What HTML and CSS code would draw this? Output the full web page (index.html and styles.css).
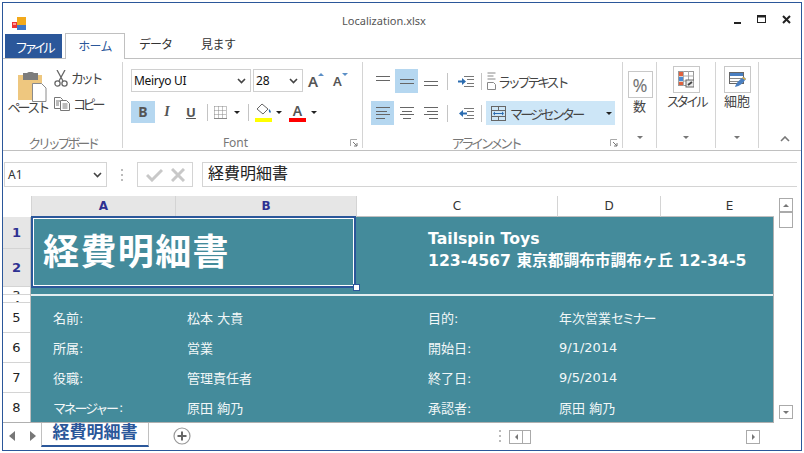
FILE: index.html
```html
<!DOCTYPE html>
<html lang="ja">
<head>
    <meta charset="UTF-8">
    <meta name="viewport" content="width=device-width, initial-scale=1.0">
    <title>Localization.xlsx</title>
    <link rel="stylesheet" href="styles.css">
</head>

<body>
<div class="window">

    <div class="titlebar">
        <svg class="app-icon" width="15" height="14" viewBox="0 0 15 14">
            <rect x="0" y="5" width="5" height="6" fill="#e33"/>
            <rect x="1" y="6" width="3" height="2" fill="#f99"/>
            <rect x="5" y="0" width="9" height="8" fill="#f2a91c"/>
            <rect x="5" y="8" width="9" height="5" fill="#3f78c8"/>
        </svg>
        <div class="doc-title">Localization.xlsx</div>
        <div class="win-buttons">
            <svg width="9" height="9" viewBox="0 0 9 9"><rect x="1" y="7" width="7" height="2" fill="#222"/></svg>
            <svg width="10" height="9" viewBox="0 0 10 9"><rect x="0.5" y="0.5" width="8" height="7" fill="none" stroke="#222"/><rect x="0" y="0" width="9" height="2.5" fill="#222"/></svg>
            <svg width="9" height="9" viewBox="0 0 9 9"><path d="M1 1l7 7M8 1l-7 7" stroke="#222" stroke-width="2"/></svg>
        </div>
    </div>

    <div class="tabs">
        <div class="tab tab-file"><span class="tab-file-text">ファイル</span></div>
        <div class="tab tab-active">ホーム</div>
        <div class="tab tab-data">データ</div>
        <div class="tab tab-view">見ます</div>
    </div>

    <div class="ribbon">
        <div class="group group-clip">
            <div class="group-body clip-body">
                <div class="paste">
                    <svg width="30" height="30" viewBox="0 0 30 30">
                        <rect x="1" y="3" width="24" height="25" fill="#eec77f"/>
                        <rect x="6" y="1" width="15" height="7" fill="#7d7d7d"/>
                        <rect x="10" y="0" width="7" height="4" rx="2" fill="#7d7d7d"/>
                        <path d="M15.500 11.500h9l4.500 4.500v13.500h-13.500z" fill="#fff" stroke="#8a8a8a"/>
                    </svg>
                    <span class="tight">ペースト</span>
                </div>
                <div class="clip-tools">
                    <div class="clip-tool">
                        <svg width="14" height="17" viewBox="0 0 14 17"><path d="M3 0l6 11M11 0l-6 11" stroke="#666" stroke-width="1.300" fill="none"/><circle cx="3.500" cy="13.500" r="2.600" fill="none" stroke="#666" stroke-width="1.300"/><circle cx="10.500" cy="13.500" r="2.600" fill="none" stroke="#666" stroke-width="1.300"/></svg>
                        <span class="tight">カット</span>
                    </div>
                    <div class="clip-tool">
                        <svg width="16" height="14" viewBox="0 0 16 14"><path d="M.5.500h6l2 2v9h-8z" fill="#fff" stroke="#777"/><path d="M6.500 3.500h6l3 3v7h-9z" fill="#fff" stroke="#777"/><path d="M2 4h4M2 6h3M2 8h3M8.500 7h5M8.500 9h5M8.500 11h5" stroke="#777"/></svg>
                        <span class="tight">コピー</span>
                    </div>
                </div>
            </div>
            <div class="group-label tight">クリップボード</div>
        </div>

        <div class="group group-font">
            <div class="group-body font-body">
                <div class="font-row">
                    <div class="combo combo-font">Meiryo UI<svg class="chev" width="9" height="6" viewBox="0 0 9 6"><path d="M1 1l3.500 3.500L8 1" fill="none" stroke="#444" stroke-width="1.600"/></svg></div>
                    <div class="combo combo-size">28<svg class="chev" width="9" height="6" viewBox="0 0 9 6"><path d="M1 1l3.500 3.500L8 1" fill="none" stroke="#444" stroke-width="1.600"/></svg></div>
                    <div class="grow-a"><span>A</span><i class="tri-up"></i></div>
                    <div class="shrink-a"><span>A</span><i class="tri-down"></i></div>
                </div>
                <div class="font-row font-row2">
                    <div class="fmt fmt-on fmt-b">B</div>
                    <div class="fmt fmt-i">I</div>
                    <div class="fmt fmt-u">U</div>
                    <i class="vsep"></i>
                    <svg class="border-icon" width="13" height="13" viewBox="0 0 13 13"><path d="M.5.500h12M.5 4.500h12M.5 8.500h12M.5.500v12M4.500.500v12M8.500.500v12M12.500.500v12" stroke="#888" stroke-dasharray="1 1" fill="none"/><path d="M0 12.500h13" stroke="#888"/></svg>
                    <i class="caret caret-border"></i>
                    <i class="vsep"></i>
                    <div class="color-btn color-fill">
                        <svg width="17" height="13" viewBox="0 0 17 13"><path d="M7 1l6 5-5 5-6-5z" fill="#fff" stroke="#666"/><path d="M14 6c2 2 2.500 3 1 4-1-1-1.500-2-1-4z" fill="#2b6cb0"/></svg>
                        <i class="swatch swatch-yellow"></i>
                    </div>
                    <i class="caret caret-fill"></i>
                    <div class="color-btn color-text">
                        <span>A</span>
                        <i class="swatch swatch-red"></i>
                    </div>
                    <i class="caret caret-text"></i>
                </div>
            </div>
            <div class="group-label label-launch">Font</div>
            <svg class="launcher" width="8" height="8" viewBox="0 0 8 8"><path d="M.5 7V.5H7" fill="none" stroke="#aaa"/><path d="M3 3l4 4M7 4v3H4" fill="none" stroke="#777"/></svg>
        </div>

        <div class="group group-align">
            <div class="group-body align-body">
                <div class="align-row">
                    <div class="al"><svg width="16" height="9" viewBox="0 0 16 9"><path d="M1 1.500h14M1 5.500h14" stroke="#666"/></svg></div>
                    <div class="al al-on al-mid"><svg width="16" height="9" viewBox="0 0 16 9"><path d="M1 1.500h14M1 5.500h14" stroke="#666"/></svg></div>
                    <div class="al al-bot"><svg width="16" height="9" viewBox="0 0 16 9"><path d="M1 1.500h14M1 5.500h14" stroke="#666"/></svg></div>
                    <i class="vsep"></i>
                    <div class="indent"><svg width="16" height="11" viewBox="0 0 16 11"><path d="M6 .5h10M9 3.500h7M9 7.500h7M6 10.500h10" stroke="#777"/><path d="M0 5.500h5" stroke="#2b6cb0" stroke-width="2"/><path d="M4 2l4 3.500-4 3.500z" fill="#2b6cb0"/></svg></div>
                    <i class="vsep"></i>
                    <div class="wrap-btn">
                        <svg width="10" height="18" viewBox="0 0 10 18"><path d="M.5 1h8M.5 4h6M.5 7h8" stroke="#888"/><path d="M.5 10.500h6l2 2v5h-8z" fill="#fff" stroke="#888"/></svg>
                        <span class="tight">ラップテキスト</span>
                    </div>
                </div>
                <div class="align-row">
                    <div class="al al-on"><svg width="16" height="12" viewBox="0 0 16 12"><path d="M1 .5h14M1 4.500h11M1 7.500h14M1 11.500h9" stroke="#666"/></svg></div>
                    <div class="al"><svg width="16" height="12" viewBox="0 0 16 12"><path d="M1 .5h14M3 4.500h10M1 7.500h14M4 11.500h8" stroke="#666"/></svg></div>
                    <div class="al"><svg width="16" height="12" viewBox="0 0 16 12"><path d="M1 .5h14M4 4.500h11M1 7.500h14M6 11.500h9" stroke="#666"/></svg></div>
                    <i class="vsep"></i>
                    <div class="indent"><svg width="16" height="11" viewBox="0 0 16 11"><path d="M6 .5h10M9 3.500h7M9 7.500h7M6 10.500h10" stroke="#777"/><path d="M4 5.500h5" stroke="#2b6cb0" stroke-width="2"/><path d="M5 2l-4 3.500 4 3.500z" fill="#2b6cb0"/></svg></div>
                    <i class="vsep"></i>
                    <div class="merge-btn">
                        <svg width="15" height="15" viewBox="0 0 15 15"><rect x=".5" y=".5" width="14" height="14" fill="none" stroke="#666"/><path d="M0 4.500h15M0 10.500h15M7.500 0v4M7.500 11v4" stroke="#666"/><path d="M3 7.500h9" stroke="#2b6cb0"/><path d="M2 7.500l2-2v4zM13 7.500l-2-2v4z" fill="#2b6cb0"/></svg>
                        <span class="merge-text">マージ·センター</span>
                        <i class="caret caret-merge"></i>
                    </div>
                </div>
            </div>
            <div class="group-label label-launch tight">アラインメント</div>
            <svg class="launcher" width="8" height="8" viewBox="0 0 8 8"><path d="M.5 7V.5H7" fill="none" stroke="#aaa"/><path d="M3 3l4 4M7 4v3H4" fill="none" stroke="#777"/></svg>
        </div>

        <div class="group group-num">
            <div class="mini-box box-num">%</div>
            <div class="mini-label">数</div>
            <i class="caret mini-caret"></i>
        </div>
        <div class="group group-style">
            <div class="mini-box">
                <svg width="16" height="17" viewBox="0 0 16 17"><rect x=".5" y=".5" width="15" height="14" fill="#fff" stroke="#999"/><path d="M5.500 0v15M10.500 0v15M0 5h16M0 10h16" stroke="#aaa"/><rect x="1" y="1" width="4" height="4" fill="#e0613d"/><rect x="1" y="6" width="4" height="4" fill="#4a8ad4"/><rect x="1" y="11" width="4" height="3" fill="#e0613d"/><rect x="8" y="9" width="8" height="7" fill="#e8e8e8" stroke="#666"/><path d="M10 14l4-3" stroke="#444" stroke-width="2"/></svg>
            </div>
            <div class="mini-label tight">スタイル</div>
            <i class="caret mini-caret"></i>
        </div>
        <div class="group group-cell">
            <div class="mini-box">
                <svg width="17" height="16" viewBox="0 0 17 16"><rect x=".5" y=".5" width="14" height="11" fill="#fff" stroke="#666"/><rect x="1" y="1" width="13" height="3" fill="#4a7fc1"/><path d="M1 6.500h13M1 9.500h13" stroke="#888"/><path d="M6 15c1-4 5-8 9-10l2 2c-3 4-6 7-11 8z" fill="#4a7fc1"/><path d="M14 5l3 2-1 1-3-2z" fill="#e8b23a"/></svg>
            </div>
            <div class="mini-label">細胞</div>
            <i class="caret mini-caret"></i>
        </div>
        <div class="collapse">
            <svg width="10" height="6" viewBox="0 0 10 6"><path d="M1 5l4-4 4 4" fill="none" stroke="#777" stroke-width="1.600"/></svg>
        </div>
    </div>

    <div class="formula">
        <div class="name-box">A1<svg class="chev" width="9" height="6" viewBox="0 0 9 6"><path d="M1 1l3.500 3.500L8 1" fill="none" stroke="#444" stroke-width="1.600"/></svg></div>
        <div class="grip"><i></i><i></i><i></i></div>
        <div class="fx-buttons">
            <svg width="17" height="14" viewBox="0 0 17 14"><path d="M1 7l5 5L16 2" fill="none" stroke="#c8c8c8" stroke-width="3"/></svg>
            <svg width="14" height="14" viewBox="0 0 14 14"><path d="M1 1l12 12M13 1L1 13" stroke="#c8c8c8" stroke-width="3"/></svg>
        </div>
        <div class="fx-input">経費明細書</div>
    </div>

    <div class="sheet-row">
        <div class="sheet">
            <div class="col-heads">
                <div class="corner"></div>
                <div class="col-head col-on col-a">A</div>
                <div class="col-head col-on col-b">B</div>
                <div class="col-head col-c">C</div>
                <div class="col-head col-d">D</div>
                <div class="col-head col-e">E</div>
            </div>
            <div class="sheet-body">
                <div class="row-heads">
                    <div class="row-head row-on r1">1</div>
                    <div class="row-head row-on r2">2</div>
                    <div class="row-head r3">3</div>
                    <div class="row-head r4">4</div>
                    <div class="row-head rn">5</div>
                    <div class="row-head rn">6</div>
                    <div class="row-head rn">7</div>
                    <div class="row-head rn rlast">8</div>
                </div>
                <div class="cells">
                    <div class="title-cell">経費明細書<i class="handle"></i></div>
                    <div class="company">Tailspin Toys<br>123-4567 東京都調布市調布ヶ丘 12-34-5</div>
                    <div class="rule"></div>
                    <div class="cell lab-a">名前:</div><div class="cell val-b">松本 大貴</div><div class="cell lab-c">目的:</div><div class="cell val-d">年次営業<span class="tight">セミナー</span></div>
                    <div class="cell lab-a">所属:</div><div class="cell val-b">営業</div><div class="cell lab-c">開始日:</div><div class="cell val-d">9/1/2014</div>
                    <div class="cell lab-a">役職:</div><div class="cell val-b">管理責任者</div><div class="cell lab-c">終了日:</div><div class="cell val-d">9/5/2014</div>
                    <div class="cell lab-a"><span class="tight kana-label">マネージャー</span>:</div><div class="cell val-b">原田 絢乃</div><div class="cell lab-c">承認者:</div><div class="cell val-d">原田 絢乃</div>
                </div>
            </div>
        </div>
        <div class="vscroll">
            <div class="sb-btn"><i class="sb-up"></i></div>
            <div class="sb-thumb"></div>
            <div class="sb-btn sb-down"><i class="sb-dn"></i></div>
        </div>
    </div>

    <div class="sheetbar">
        <div class="nav-arrows"><i class="nav-left"></i><i class="nav-right"></i></div>
        <div class="sheet-tab">経費明細書</div>
        <svg class="add-sheet" width="18" height="18" viewBox="0 0 18 18"><circle cx="9" cy="9" r="8" fill="none" stroke="#999" stroke-width="1.200"/><path d="M9 4.500v9M4.500 9h9" stroke="#666" stroke-width="2"/></svg>
        <div class="grip grip-tabs"><i></i><i></i><i></i></div>
        <div class="hscroll">
            <div class="sb-btn"><i class="sb-lt"></i></div>
            <div class="h-thumb"></div>
            <div class="h-space"></div>
            <div class="sb-btn"><i class="sb-rt"></i></div>
        </div>
    </div>

</div>
</body>
</html>
```

FILE: styles.css
```css
* {
    box-sizing: border-box;
}

body {
    margin: 0;
    background: white;
    font-family: "Noto Sans", "Noto Sans CJK JP", sans-serif;
    color: #333;
    font-size: 12px;
}

i {
    display: block;
}

/* Meiryo UI has narrow kana, this gets close */
.tight {
    letter-spacing: -2.2px;
}

.ribbon .tight {
    font-size: 13px;
    letter-spacing: -3.2px;
}

.window {
    margin: 2px;
    width: 800px;
    height: 449px;
    border: 1px solid #2b579a;
    overflow: hidden;
}

/* title bar */
.titlebar {
    height: 30px;
    display: flex;
    align-items: center;
    padding-left: 9px;
}

.app-icon {
    margin-top: 11px;
}

.doc-title {
    flex: 1;
    text-align: center;
    font-size: 11px;
    color: #555;
    padding-left: 26px;
    margin-top: 4px;
}

.win-buttons {
    display: flex;
    align-items: center;
    gap: 15px;
    padding-right: 10px;
    width: 86px;
    justify-content: flex-end;
    margin-top: 3px;
}

/* tabs */
.tabs {
    height: 26px;
    display: flex;
    align-items: flex-end;
    border-bottom: 1px solid #c0c0c0;
    padding-left: 2px;
}

.tab {
    font-size: 12px;
    height: 25px;
    line-height: 24px;
    color: #333;
}

.tab-file {
    width: 57px;
    background: #2b579a;
    color: white;
    text-align: center;
    height: 24px;
    line-height: 26px;
}

.tab-file-text {
    font-size: 13px;
    letter-spacing: -3.7px;
}

.tab-active {
    margin-left: 3px;
    width: 60px;
    height: 26px;
    margin-bottom: -1px;
    background: white;
    color: #2b579a;
    text-align: center;
    border: 1px solid #c0c0c0;
    border-bottom: 0;
    line-height: 26px;
    letter-spacing: -0.7px;
}

.tab-data {
    margin-left: 14px;
    letter-spacing: -1px;
}

.tab-view {
    margin-left: 29px;
    letter-spacing: -0.5px;
}

/* ribbon */
.ribbon {
    height: 92px;
    display: flex;
    border-bottom: 1px solid #c0c0c0;
    padding: 3px 0 2px;
}

.group {
    border-right: 1px solid #d4d4d4;
    position: relative;
    display: flex;
    flex-direction: column;
}

.group-body {
    flex: 1;
}

.group-label {
    text-align: center;
    font-size: 12px;
    line-height: 16px;
    height: 13px;
    color: #777;
}

.label-launch {
    padding-right: 14px;
}

.launcher {
    position: absolute;
    right: 4px;
    bottom: 1px;
}

.group-clip {
    width: 120px;
}

.clip-body {
    display: flex;
    padding: 7px 0 0 5px;
}

.paste {
    width: 39px;
    display: flex;
    flex-direction: column;
    align-items: center;
}

.paste svg {
    align-self: flex-start;
    margin: 3px 0 0 9px;
    flex: none;
}

.paste span {
    line-height: 14px;
    margin-top: -2px;
    white-space: nowrap;
    color: #444;
}

.ribbon .paste .tight {
    letter-spacing: -2.8px;
}

.clip-tools {
    padding-left: 7px;
    display: flex;
    flex-direction: column;
    gap: 8px;
    padding-top: 0;
}

.clip-tool {
    display: flex;
    align-items: center;
    gap: 3px;
    height: 18px;
    color: #444;
}

.clip-tool span {
    margin-top: -1px;
}

.group-font {
    width: 240px;
}

.font-body {
    padding: 7px 0 0 8px;
}

.font-row {
    display: flex;
    align-items: center;
    height: 23px;
}

.combo {
    height: 23px;
    border: 1px solid #d0d0d0;
    display: flex;
    align-items: center;
    justify-content: space-between;
    padding: 0 4px 0 2px;
    font-size: 12px;
    color: #111;
}

.combo-font {
    width: 120px;
    letter-spacing: -0.3px;
}

.combo-size {
    width: 50px;
    margin-left: 2px;
}

.grow-a, .shrink-a {
    display: flex;
    font-size: 15px;
    color: #555;
    font-weight: 600;
    line-height: 20px;
}

.grow-a {
    margin-left: 5px;
}

.shrink-a {
    margin-left: 9px;
    font-size: 13px;
}

.tri-up {
    border: 3px solid transparent;
    border-top: 0;
    border-bottom: 3px solid #5b8fc7;
    margin-top: 2px;
    height: 3px;
}

.tri-down {
    border: 3px solid transparent;
    border-bottom: 0;
    border-top: 3px solid #5b8fc7;
    margin-top: 2px;
    height: 3px;
}

.font-row2 {
    margin-top: 9px;
    height: 22px;
}

.fmt {
    width: 24px;
    height: 22px;
    line-height: 22px;
    text-align: center;
    font-weight: 700;
    color: #555;
    font-size: 13px;
}

.fmt-on {
    background: #b5d7f0;
}

.fmt-b {
    font-size: 14px;
}

.fmt-i {
    font-style: italic;
    font-family: "Liberation Serif", serif;
    font-size: 14px;
}

.fmt-u {
    text-decoration: underline;
}

.vsep {
    width: 1px;
    height: 17px;
    background: #c4c4c4;
}

.font-row2 .vsep:first-of-type {
    margin-left: 4px;
}

.border-icon {
    margin-left: 6px;
}

.caret {
    width: 0;
    height: 0;
    border: 3px solid transparent;
    border-bottom: 0;
    border-top: 3px solid #222;
}

.caret-border {
    margin: 0 8px 0 7px;
}

.color-btn {
    width: 17px;
    height: 20px;
    display: flex;
    flex-direction: column;
    align-items: center;
    justify-content: flex-end;
}

.color-fill {
    margin-left: 6px;
}

.color-btn span {
    font-size: 14px;
    line-height: 15px;
    font-weight: 600;
    color: #555;
}

.swatch {
    width: 17px;
    height: 4px;
    flex: none;
}

.swatch-yellow {
    background: #ffff00;
    margin-top: 2px;
}

.swatch-red {
    background: #ff0000;
}

.caret-fill {
    margin: 0 7px 0 4px;
}

.caret-text {
    margin-left: 5px;
}

.group-align {
    width: 260px;
}

.align-body {
    padding: 7px 0 0 8px;
}

.align-row {
    display: flex;
    align-items: center;
    height: 24px;
    margin-bottom: 8px;
}

.align-row .vsep:first-of-type {
    margin-left: 4px;
}

.al {
    width: 23px;
    height: 24px;
    display: flex;
    align-items: center;
    justify-content: center;
    margin-right: 1px;
    padding-bottom: 3px;
}

.align-row:last-child .al {
    padding-bottom: 0;
}

.al-on {
    background: #b5d7f0;
}

.al-mid {
    padding-bottom: 0;
    padding-top: 2px;
}

.al-bot {
    padding-bottom: 0;
    padding-top: 6px;
}

.indent {
    margin: 0 7px 0 10px;
    width: 16px;
    display: flex;
}

.wrap-btn {
    display: flex;
    align-items: center;
    margin-left: 5px;
    gap: 1px;
    color: #444;
}

.merge-btn {
    width: 129px;
    height: 24px;
    margin-left: 4px;
    background: #cde6f7;
    display: flex;
    align-items: center;
    padding-left: 5px;
    gap: 4px;
    color: #444;
}

.merge-text {
    font-size: 13px;
    letter-spacing: -2.7px;
}

.caret-merge {
    margin-left: auto;
    margin-right: 3px;
}

.group-num {
    width: 34px;
    align-items: center;
}

.group-style {
    width: 59px;
    align-items: center;
}

.group-cell {
    width: 43px;
    align-items: center;
}

.mini-box {
    width: 27px;
    height: 27px;
    margin-top: 4px;
    border: 1px solid #c8c8c8;
    display: flex;
    align-items: center;
    justify-content: center;
}

.box-num {
    width: 25px;
    margin-top: 9px;
    margin-left: 1px;
    font-size: 18px;
    color: #777;
}

.mini-label {
    font-size: 13px;
    line-height: 14px;
    margin-top: 1px;
    color: #444;
    white-space: nowrap;
}

.mini-caret {
    margin-top: auto;
    margin-bottom: 9px;
    border-top-color: #777;
}

.collapse {
    flex: 1;
    display: flex;
    align-items: flex-end;
    justify-content: flex-end;
    padding: 0 11px 6px 0;
}

/* formula bar */
.formula {
    margin-top: 11px;
    height: 25px;
    display: flex;
    align-items: stretch;
    padding-left: 1px;
}

.name-box {
    width: 103px;
    border: 1px solid #d4d4d4;
    display: flex;
    align-items: center;
    justify-content: space-between;
    padding: 0 4px 0 3px;
    color: #333;
}

.grip {
    display: flex;
    flex-direction: column;
    justify-content: center;
    gap: 3px;
    width: 30px;
    align-items: center;
}

.grip i {
    width: 2px;
    height: 2px;
    background: #bbb;
}

.fx-buttons {
    width: 56px;
    border: 1px solid #d4d4d4;
    display: flex;
    align-items: center;
    justify-content: center;
    gap: 8px;
}

.fx-input {
    width: 595px;
    margin-left: 9px;
    border: solid #d4d4d4;
    border-width: 1px 0 1px 1px;
    font-size: 16px;
    line-height: 20px;
    padding-left: 5px;
    color: #222;
}

/* sheet */
.sheet-row {
    margin-top: 9px;
    display: flex;
    height: 227px;
}

.sheet {
    width: 771px;
    flex: none;
    font-family: "DejaVu Sans", "Noto Sans CJK JP", sans-serif;
}

.col-heads {
    display: flex;
    height: 21px;
}

.corner {
    width: 28px;
    flex: none;
}

.col-head {
    text-align: center;
    line-height: 21px;
    font-size: 12px;
    color: #333;
    border-right: 1px solid #d4d4d4;
    border-bottom: 1px solid #c0c0c0;
}

.col-on {
    background: #e6e6e6;
    color: #2e3192;
    font-weight: 700;
}

.col-a {
    width: 145px;
    border-left: 1px solid #d4d4d4;
}

.col-b {
    width: 181px;
}

.col-c {
    width: 201px;
}

.col-d {
    width: 103px;
}

/* column E runs on past the visible edge */
.col-e {
    width: 113px;
    padding-left: 24px;
    border-right: 0;
}

.sheet-body {
    display: flex;
    height: 206px;
    border-bottom: 1px solid #b0b0b0;
}

.row-heads {
    width: 28px;
    flex: none;
    border-right: 1px solid #c0c0c0;
}

.row-head {
    text-align: center;
    font-size: 13px;
    border-bottom: 1px solid #d4d4d4;
    overflow: hidden;
}

.row-on {
    background: #e6e6e6;
    color: #2e3192;
    font-weight: 700;
}

.r1 {
    height: 32px;
    line-height: 31px;
}

.r2 {
    height: 38px;
    line-height: 37px;
}

.r3 {
    height: 8px;
    line-height: 18px;
    color: #333;
}

.r4 {
    height: 8px;
    line-height: 22px;
    color: #333;
}

.rn {
    height: 30px;
    line-height: 29px;
    color: #222;
}

.rlast {
    border-bottom: 0;
}

.cells {
    width: 743px;
    flex: none;
    background: #448b9b;
    display: grid;
    grid-template-columns: 144px 181px 201px 103px 113px;
    grid-template-rows: 70px 15px 30px 30px 30px 30px;
    color: #f2f7f8;
    border-right: 1px solid #b0b0b0;
    font-size: 13px;
}

.title-cell {
    grid-column: 1 / 3;
    position: relative;
    border: 2px solid #2b579a;
    outline: 1px solid white;
    outline-offset: -3px;
    font-size: 36px;
    font-weight: 700;
    color: white;
    line-height: 69px;
    padding-left: 10px;
    letter-spacing: 1.4px;
    margin-top: -1px;
    height: 72px;
}

.handle {
    position: absolute;
    right: -6px;
    bottom: -5px;
    width: 7px;
    height: 7px;
    background: white;
    border: 1px solid #2b579a;
}

.company {
    grid-column: 3 / 6;
    padding: 11px 0 0 72px;
    font-size: 15.7px;
    font-weight: 700;
    color: white;
    line-height: 22px;
    white-space: nowrap;
}

.rule {
    grid-column: 1 / -1;
    height: 9px;
    border-bottom: 2px solid #e4eef0;
}

.cell {
    display: flex;
    align-items: center;
    white-space: nowrap;
}

.lab-a {
    grid-column: 1;
    padding-left: 22px;
}

.kana-label {
    padding-right: 2px;
}

.val-b {
    padding-left: 12px;
}

.lab-c {
    padding-left: 72px;
}

.val-d {
    padding-left: 2px;
}

/* scrollbars */
.vscroll {
    width: 28px;
    padding: 2px 0 0 5px;
    display: flex;
    flex-direction: column;
}

.sb-btn {
    width: 14px;
    height: 14px;
    border: 1px solid #aaa;
    display: flex;
    align-items: center;
    justify-content: center;
    flex: none;
}

.sb-thumb {
    width: 14px;
    height: 16px;
    border: 1px solid #aaa;
}

.sb-down {
    margin-top: 177px;
}

.sb-up, .sb-dn, .sb-lt, .sb-rt {
    width: 0;
    height: 0;
    border: 3px solid transparent;
}

.sb-up {
    border-top: 0;
    border-bottom-color: #777;
}

.sb-dn {
    border-bottom: 0;
    border-top-color: #777;
}

.sb-lt {
    border-left: 0;
    border-right-color: #777;
}

.sb-rt {
    border-right: 0;
    border-left-color: #777;
}

/* sheet tabs */
.sheetbar {
    height: 28px;
    display: flex;
    align-items: flex-start;
    position: relative;
}

.nav-arrows {
    display: flex;
    gap: 15px;
    padding: 8px 0 0 6px;
    width: 38px;
}

.nav-left, .nav-right {
    width: 0;
    height: 0;
    border: 4px solid transparent;
    border-width: 5px 6px;
}

.nav-left {
    border-left: 0;
    border-right-color: #777;
}

.nav-right {
    border-right: 0;
    border-left-color: #777;
}

.sheet-tab {
    width: 108px;
    height: 24px;
    border: 1px solid #c0c0c0;
    border-top: 0;
    border-bottom: 2px solid #2b579a;
    text-align: center;
    font-size: 17px;
    font-weight: 700;
    color: #2b579a;
    line-height: 18px;
}

.add-sheet {
    margin: 4px 0 0 24px;
}

.grip-tabs {
    width: 2px;
    margin: 4px 0 0 308px;
    height: 17px;
}

.hscroll {
    display: flex;
    margin: 7px 0 0 8px;
}

.hscroll .sb-btn {
    width: 14px;
}

.h-thumb {
    width: 8px;
    height: 14px;
    border: 1px solid #aaa;
    border-left: 0;
}

.h-space {
    width: 215px;
}
```
